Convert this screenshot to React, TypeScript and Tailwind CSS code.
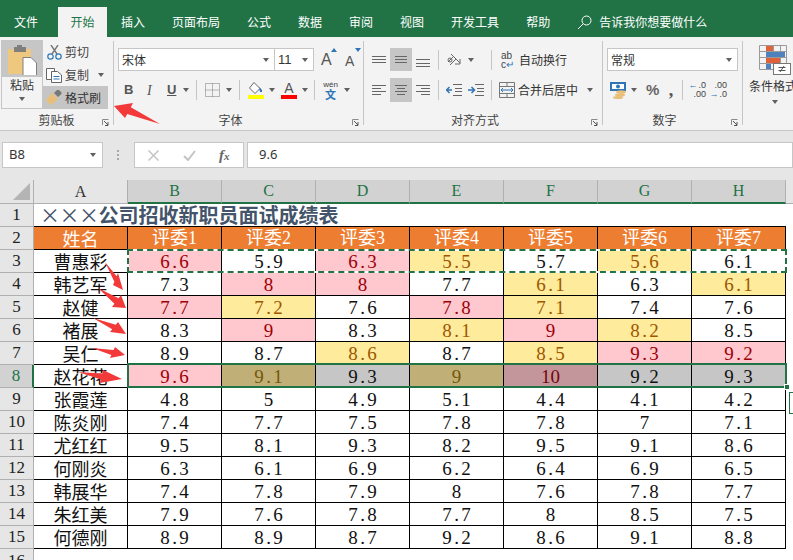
import React from 'react'

const tabs = ['插入', '页面布局', '公式', '数据', '审阅', '视图', '开发工具', '帮助']
const columns = ['B', 'C', 'D', 'E', 'F', 'G', 'H']

// p = pink, y = yellow, s = selected gray, o = selected yellow, d = selected pink, . = plain
const rows = [
  { name: '曹惠彩', scores: ['6.6', '5.9', '6.3', '5.5', '5.7', '5.6', '6.1'], fill: 'p.py.y.' },
  { name: '韩艺军', scores: ['7.3', '8', '8', '7.7', '6.1', '6.3', '6.1'], fill: '.pp.y.y' },
  { name: '赵健', scores: ['7.7', '7.2', '7.6', '7.8', '7.1', '7.4', '7.6'], fill: 'py.py..' },
  { name: '褚展', scores: ['8.3', '9', '8.3', '8.1', '9', '8.2', '8.5'], fill: '.p.ypy.' },
  { name: '吴仁', scores: ['8.9', '8.7', '8.6', '8.7', '8.5', '9.3', '9.2'], fill: '..y.ypp' },
  { name: '赵花花', scores: ['9.6', '9.1', '9.3', '9', '10', '9.2', '9.3'], fill: 'posodss' },
  { name: '张霞莲', scores: ['4.8', '5', '4.9', '5.1', '4.4', '4.1', '4.2'], fill: '.......' },
  { name: '陈炎刚', scores: ['7.4', '7.7', '7.5', '7.8', '7.8', '7', '7.1'], fill: '.......' },
  { name: '尤红红', scores: ['9.5', '8.1', '9.3', '8.2', '9.5', '9.1', '8.6'], fill: '.......' },
  { name: '何刚炎', scores: ['6.3', '6.1', '6.9', '6.2', '6.4', '6.9', '6.5'], fill: '.......' },
  { name: '韩展华', scores: ['7.4', '7.8', '7.9', '8', '7.6', '7.8', '7.7'], fill: '.......' },
  { name: '朱红美', scores: ['7.9', '7.6', '7.8', '7.7', '8', '8.5', '7.5'], fill: '.......' },
  { name: '何德刚', scores: ['8.9', '8.9', '8.7', '9.2', '8.6', '9.1', '8.8'], fill: '.......' },
]

const fillClass: Record<string, string> = {
  '.': 'bg-white text-[#111]',
  p: 'bg-[#ffc7ce] text-[#9c0006]',
  y: 'bg-[#ffeb9c] text-[#9c5700]',
  s: 'bg-[#c6c6c6] text-[#111]',
  o: 'bg-[#c0b077] text-[#75570a]',
  d: 'bg-[#c2969b] text-[#75050a]',
}

function Caret({ className = '' }: { className?: string }) {
  return <span className={'inline-block h-0 w-0 border-x-[3.5px] border-t-[4px] border-x-transparent border-t-[#606060] ' + className} />
}

function Launcher() {
  return (
    <svg className="absolute right-[4px] bottom-[4px]" width="7" height="7" viewBox="0 0 7 7">
      <path d="M0.5 6V0.5H6.5" fill="none" stroke="#8a8a8a" />
      <path d="M2 2L6 6M6 3V6.5H3" fill="none" stroke="#555" />
    </svg>
  )
}

function Sep() {
  return <div className="mt-1 mb-[5px] w-px bg-[#c6c6c6]" />
}

function MiniSep({ className = '' }: { className?: string }) {
  return <div className={'h-[20px] w-px bg-[#c6c6c6] ' + className} />
}

function Lines({ items, color = '#666' }: { items: number[][]; color?: string }) {
  return (
    <svg width="16" height="18" viewBox="0 0 16 18">
      {items.map((l, i) => (
        <line key={i} x1={l[0]} x2={l[1]} y1={l[2] + 0.5} y2={l[2] + 0.5} stroke={color} />
      ))}
    </svg>
  )
}

function AlignBtn({ items, active }: { items: number[][]; active?: boolean }) {
  return (
    <div className={'flex h-full w-[22px] items-center justify-center ' + (active ? 'bg-[#c6c6c6]' : '')}>
      <Lines items={items} />
    </div>
  )
}

function Num({ value }: { value: string }) {
  const parts = value.split('.')
  return (
    <span className="font-['Liberation_Serif',serif] text-[19px] leading-none">
      {parts[0]}
      {parts[1] && <span className="inline-block w-[9.5px] text-center">.</span>}
      {parts[1]}
    </span>
  )
}

function arrowPoints(tail: number[], tip: number[], a: number[], b: number[]) {
  // notches sit about halfway from each barb to the shaft
  const mid = [(a[0] + b[0]) / 2, (a[1] + b[1]) / 2]
  const n1 = [a[0] + (mid[0] - a[0]) * 0.55, a[1] + (mid[1] - a[1]) * 0.55]
  const n2 = [b[0] + (mid[0] - b[0]) * 0.55, b[1] + (mid[1] - b[1]) * 0.55]
  return [tail, n1, a, tip, b, n2].map((p) => p.join(',')).join(' ')
}

const arrows = [
  [[160, 124], [114, 106], [133, 103], [125, 118]],
  [[105, 262], [123, 290], [118, 273], [113, 285]],
  [[98, 288], [126, 308], [121, 295], [112, 307]],
  [[93, 318], [126, 334], [118, 322], [110, 332]],
  [[92, 348], [125, 355], [115, 347], [110, 358]],
  [[78, 372], [122, 379], [103, 370], [100, 383]],
]

export default function App() {
  return (
    <div lang="zh-CN" className="relative h-[560px] w-[793px] overflow-hidden bg-white font-['Noto_Sans_CJK_SC',sans-serif] text-[12px] text-[#444]">
      {/* tabs */}
      <div className="flex h-[37px] gap-px bg-[#217346] pl-px text-white">
        <div className="mt-[7px] flex h-[30px] items-center px-[13px]">文件</div>
        <div className="mt-[7px] ml-[6px] flex h-[30px] w-[49px] items-center justify-center bg-[#f3f3f3] text-[#217346]">开始</div>
        {tabs.map((t) => (
          <div key={t} className="mt-[7px] flex h-[30px] items-center px-[13px]">{t}</div>
        ))}
        <div className="mt-[7px] ml-[13px] flex h-[30px] items-center">
          <svg width="15" height="15" viewBox="0 0 15 15" fill="none" stroke="#fff">
            <circle cx="9.5" cy="5.5" r="4.5" />
            <path d="M6.2 8.8L1 14" />
          </svg>
          <span className="ml-[7px]">告诉我你想要做什么</span>
        </div>
      </div>

      {/* ribbon */}
      <div className="flex h-[94px] border-b border-[#c8c8c8] bg-[#f3f3f3]">
        {/* clipboard */}
        <div className="relative flex w-[113px] flex-col">
          <div className="flex h-[73px] pt-[3px] pl-px">
            <div className="flex h-[69px] w-[42px] flex-col items-center border border-[#c6c6c6]">
              <div className="flex h-[36px] w-full items-center justify-center bg-[#c6c6c6]">
                <svg width="32" height="32" viewBox="0 0 32 32">
                  <rect x="2" y="6" width="23" height="25" rx="1" fill="#edc87e" />
                  <path d="M8 6V4H11V2H16V4H20V9H8Z" fill="#7f7f7f" />
                  <path d="M17 14.5H25L30.5 20V32.5H17Z" fill="#fff" stroke="#808080" />
                </svg>
              </div>
              <span className="mt-[1px] leading-[14px] text-[#333]">粘贴</span>
              <Caret className="mt-[5px]" />
            </div>
            <div className="flex w-[65px] flex-col pt-[2px]">
              <div className="flex h-[20px] items-center pl-[4px]">
                <svg width="15" height="15" viewBox="0 0 15 15" fill="none">
                  <path d="M4 0L10 9M11 0L5 9" stroke="#777" strokeWidth="1.4" />
                  <circle cx="3.5" cy="11.5" r="2.7" stroke="#2e75b6" strokeWidth="1.2" />
                  <circle cx="11.5" cy="11.5" r="2.7" stroke="#2e75b6" strokeWidth="1.2" />
                </svg>
                <span className="ml-[3px]">剪切</span>
              </div>
              <div className="mt-[3px] flex h-[20px] items-center pl-[3px]">
                <svg width="16" height="15" viewBox="0 0 16 15" fill="#fff" stroke="#666">
                  <path d="M0.5 0.5H8.5V11.5H0.5Z" />
                  <path d="M5.5 3.5H11.5L15.5 7V14.5H5.5Z" />
                  <path d="M7.5 8.5H13.5M7.5 11H13.5" stroke="#2e75b6" />
                </svg>
                <span className="ml-[3px]">复制</span>
                <Caret className="ml-[9px]" />
              </div>
              <div className="mt-px flex h-[23px] items-center bg-[#c5c5c5] pl-[3px]">
                <svg width="16" height="15" viewBox="0 0 16 15">
                  <path d="M0 10L6 3L12 9L5 15Z" fill="#e8bf78" />
                  <path d="M8 3L11 0H13L15.5 2.5V4L12 7Z" fill="#777" />
                </svg>
                <span className="ml-[3px] text-[#333]">格式刷</span>
              </div>
            </div>
          </div>
          <div className="mt-auto flex h-[20px] items-center justify-center">剪贴板</div>
          <Launcher />
        </div>
        <Sep />

        {/* font */}
        <div className="relative flex w-[249px] flex-col pl-[4px]">
          <div className="mt-[11px] flex h-[23px] items-center">
            <div className="flex h-full w-[157px] items-center justify-between border border-[#c6c6c6] bg-white pr-[5px] pl-[3px] text-[#333]">
              宋体<Caret />
            </div>
            <div className="-ml-px flex h-full w-[40px] items-center justify-between border border-[#c6c6c6] bg-white pr-[5px] pl-[3px] text-[#333]">
              <span className="font-['Liberation_Sans',sans-serif] text-[13px]">11</span>
              <Caret />
            </div>
            <div className="relative ml-[7px] w-[14px] font-['Liberation_Sans',sans-serif] text-[16px] leading-none text-[#555]">
              A
              <span className="absolute -top-[4px] right-[-2px] h-0 w-0 border-x-[3px] border-b-[4px] border-x-transparent border-b-[#2e75b6]" />
            </div>
            <div className="relative ml-[10px] w-[12px] pt-[2px] font-['Liberation_Sans',sans-serif] text-[14px] leading-none text-[#555]">
              A
              <span className="absolute -top-[4px] right-[-4px] h-0 w-0 border-x-[3px] border-t-[4px] border-x-transparent border-t-[#2e75b6]" />
            </div>
          </div>
          <div className="mt-[9px] flex h-[20px] items-center text-[#555]">
            <span className="ml-[6px] w-[10px] font-['Liberation_Sans',sans-serif] text-[13px] font-bold">B</span>
            <span className="ml-[13px] w-[8px] font-['Liberation_Serif',serif] text-[14px] italic">I</span>
            <span className="ml-[12px] w-[10px] font-['Liberation_Sans',sans-serif] text-[13px] font-bold underline">U</span>
            <Caret className="ml-[6px]" />
            <MiniSep className="ml-[7px]" />
            <svg className="ml-[8px]" width="15" height="14" viewBox="0 0 15 14" fill="none" stroke="#777" strokeDasharray="1 1">
              <path d="M0.5 0.5H14.5V13.5H0.5ZM7.5 0.5V13.5M0.5 7H14.5" />
            </svg>
            <Caret className="ml-[6px]" />
            <MiniSep className="ml-[7px]" />
            <div className="ml-[7px] flex w-[17px] flex-col items-center">
              <svg width="15" height="13" viewBox="0 0 15 13" fill="none">
                <path d="M6 0.5L12 6.5L7 11.5L1.5 6Z" fill="#fff" stroke="#666" />
                <path d="M11 5L14 8V10H12Z" fill="#2e75b6" />
              </svg>
              <span className="h-[4px] w-[16px] bg-[#ffff00]" />
            </div>
            <Caret className="ml-[5px]" />
            <div className="ml-[6px] flex w-[16px] flex-col items-center">
              <span className="h-[13px] font-['Liberation_Sans',sans-serif] text-[14px] leading-[13px] text-[#555]">A</span>
              <span className="h-[4px] w-[16px] bg-[#ff0000]" />
            </div>
            <Caret className="ml-[5px]" />
            <MiniSep className="ml-[6px]" />
            <div className="ml-[7px] flex w-[17px] flex-col items-center">
              <span className="font-['Liberation_Sans',sans-serif] text-[8px] leading-[8px] text-[#444]">wén</span>
              <span className="text-[11px] leading-[11px] font-bold text-[#2e75b6]">文</span>
            </div>
            <Caret className="ml-[5px]" />
          </div>
          <div className="mt-auto flex h-[20px] items-center justify-center pr-[20px]">字体</div>
          <Launcher />
        </div>
        <Sep />

        {/* alignment */}
        <div className="relative flex w-[238px] flex-col pl-[4px]">
          <div className="mt-[11px] flex h-[23px] items-center">
            <AlignBtn items={[[1, 15, 5], [1, 15, 8], [1, 15, 11]]} />
            <AlignBtn active items={[[2, 14, 5], [2, 14, 8], [2, 14, 11]]} />
            <AlignBtn items={[[1, 15, 8], [1, 15, 12], [1, 15, 15]]} />
            <MiniSep className="ml-[4px]" />
            <svg className="ml-[7px]" width="17" height="17" viewBox="0 0 17 17" fill="none" stroke="#666">
              <path d="M2 11L8 5M4 14L10 8M5 3L14 12" />
              <path d="M14 8V13H9" stroke="#666" />
              <circle cx="4" cy="9" r="2" />
            </svg>
            <Caret className="ml-[5px]" />
            <MiniSep className="ml-[17px]" />
            <div className="ml-[9px] flex w-[15px] flex-col font-['Liberation_Sans',sans-serif] text-[10px] leading-[9px] text-[#444]">
              <span>ab</span>
              <span>c<span className="text-[#2e75b6]">↵</span></span>
            </div>
            <span className="ml-[3px] text-[#333]">自动换行</span>
          </div>
          <div className="mt-[7px] flex h-[24px] items-center">
            <AlignBtn items={[[1, 15, 4], [1, 10, 7], [1, 15, 10], [1, 10, 13]]} />
            <AlignBtn active items={[[2, 14, 4], [4, 12, 7], [2, 14, 10], [4, 12, 13]]} />
            <AlignBtn items={[[1, 15, 4], [6, 15, 7], [1, 15, 10], [6, 15, 13]]} />
            <MiniSep className="ml-[4px]" />
            <svg className="ml-[7px]" width="16" height="14" viewBox="0 0 16 14" fill="none">
              <path d="M7 1.5H16M9 5.5H16M9 8.5H16M7 12.5H16" stroke="#666" />
              <path d="M6 7H1M3.5 4L0.5 7L3.5 10" stroke="#2e75b6" strokeWidth="1.5" />
            </svg>
            <svg className="ml-[6px]" width="16" height="14" viewBox="0 0 16 14" fill="none">
              <path d="M7 1.5H16M9 5.5H16M9 8.5H16M7 12.5H16" stroke="#666" />
              <path d="M0 7H6M3.5 4L6.5 7L3.5 10" stroke="#2e75b6" strokeWidth="1.5" />
            </svg>
            <MiniSep className="ml-[7px]" />
            <svg className="ml-[7px]" width="16" height="16" viewBox="0 0 16 16" fill="none">
              <path d="M0.5 0.5H15.5V15.5H0.5ZM0.5 4.5H15.5M0.5 11.5H15.5M8 0.5V4.5M8 11.5V15.5" stroke="#777" />
              <path d="M2 8H14M4 6L2 8L4 10M12 6L14 8L12 10" stroke="#2e75b6" />
            </svg>
            <span className="ml-[3px] text-[#333]">合并后居中</span>
            <Caret className="ml-[9px]" />
          </div>
          <div className="mt-auto flex h-[20px] items-center justify-center pr-[20px]">对齐方式</div>
          <Launcher />
        </div>
        <Sep />

        {/* number */}
        <div className="relative flex w-[139px] flex-col pl-[4px]">
          <div className="mt-[11px] flex h-[23px] w-[131px] items-center justify-between border border-[#c6c6c6] bg-white pr-[5px] pl-[3px] text-[#333]">
            常规<Caret />
          </div>
          <div className="mt-[7px] flex h-[24px] items-center">
            <svg className="ml-[3px]" width="17" height="17" viewBox="0 0 17 17">
              <rect x="0" y="0" width="16" height="9" fill="#2e75b6" />
              <rect x="2" y="2" width="12" height="5" fill="#fff" />
              <circle cx="8" cy="4.5" r="2" fill="#2e75b6" />
              <ellipse cx="11" cy="10" rx="5" ry="1.8" fill="#e8bf78" />
              <ellipse cx="10" cy="13" rx="5" ry="1.8" fill="#e8bf78" />
              <ellipse cx="8" cy="15.5" rx="5" ry="1.5" fill="#e8bf78" />
            </svg>
            <Caret className="ml-[4px]" />
            <span className="ml-[9px] w-[14px] font-['Liberation_Sans',sans-serif] text-[15px] font-bold text-[#666]">%</span>
            <span className="ml-[6px] w-[10px] text-center font-['Liberation_Serif',serif] text-[18px] leading-[12px] font-bold text-[#555]">,</span>
            <MiniSep className="ml-[6px]" />
            <div className="ml-[7px] flex w-[16px] flex-col items-end font-['Liberation_Sans',sans-serif] text-[9px] leading-[9px] text-[#444]">
              <span className="flex items-center"><span className="mr-px text-[#2e75b6]">←</span>.0</span>
              <span>.00</span>
            </div>
            <div className="ml-[5px] flex w-[16px] flex-col items-end font-['Liberation_Sans',sans-serif] text-[9px] leading-[9px] text-[#444]">
              <span>.00</span>
              <span className="flex items-center"><span className="mr-px text-[#2e75b6]">→</span>.0</span>
            </div>
          </div>
          <div className="mt-auto flex h-[20px] items-center justify-center pr-[20px]">数字</div>
          <Launcher />
        </div>
        <Sep />

        {/* conditional format */}
        <div className="flex flex-1 flex-col overflow-hidden">
          <svg className="mt-[8px] ml-[16px] shrink-0" width="32" height="30" viewBox="0 0 32 30" fill="none">
            <path d="M0.5 0.5H27.5V24.5H0.5ZM0.5 6.5H27.5M0.5 12.5H27.5M0.5 18.5H27.5M7.5 0.5V24.5M14.5 0.5V24.5M21.5 0.5V24.5" stroke="#9a9a9a" />
            <rect x="7" y="1" width="7" height="5" fill="#e0623a" />
            <rect x="7" y="7" width="19" height="5" fill="#4f81bd" />
            <rect x="7" y="13" width="14" height="5" fill="#e0623a" />
            <rect x="7" y="19" width="5" height="5" fill="#4f81bd" />
            <rect x="14.5" y="18.5" width="17" height="11" fill="#fff" stroke="#777" />
            <path d="M19.5 22.5H26.5M19.5 25.5H26.5M25 21L21 27" stroke="#555" />
          </svg>
          <span className="mt-[2px] ml-[6px] whitespace-nowrap text-[#333]">条件格式化</span>
          <Caret className="mt-[5px] ml-[29px] shrink-0" />
        </div>
      </div>

      {/* formula bar */}
      <div className="flex h-[49px] bg-[#e6e6e6] pt-[11px]">
        <div className="ml-[2px] flex h-[26px] w-[101px] items-center justify-between border border-[#c6c6c6] bg-white pr-[6px] pl-[6px] font-['Noto_Sans',sans-serif] text-[13px] text-[#333]">
          B8<Caret />
        </div>
        <div className="ml-[14px] flex h-[26px] w-[3px] flex-col justify-center gap-[2px]">
          <span className="h-[2px] w-[2px] bg-[#a8a8a8]" />
          <span className="h-[2px] w-[2px] bg-[#a8a8a8]" />
          <span className="h-[2px] w-[2px] bg-[#a8a8a8]" />
        </div>
        <div className="ml-[14px] flex h-[26px] w-[110px] items-center border border-[#c6c6c6] bg-white">
          <svg className="ml-[13px]" width="11" height="11" viewBox="0 0 11 11" fill="none" stroke="#c4c4c4" strokeWidth="1.5">
            <path d="M0.5 0.5L10.5 10.5M10.5 0.5L0.5 10.5" />
          </svg>
          <svg className="ml-[24px]" width="13" height="11" viewBox="0 0 13 11" fill="none" stroke="#c4c4c4" strokeWidth="2">
            <path d="M1 6L5 10L12 1" />
          </svg>
          <span className="ml-[23px] font-['Liberation_Serif',serif] text-[15px] font-bold text-[#666] italic">
            f<span className="text-[11px]">x</span>
          </span>
        </div>
        <div className="ml-[3px] flex h-[26px] flex-1 items-center border border-[#c6c6c6] bg-white pl-[11px] font-['Noto_Sans',sans-serif] text-[13px] text-[#333]">
          9.6
        </div>
      </div>

      {/* sheet */}
      <div className="relative h-[380px] overflow-hidden">
        <div className="grid grid-cols-[34px_repeat(8,94px)_1fr] grid-rows-[24px_repeat(16,23px)]">
          <div className="flex items-end justify-end border-r border-b border-[#b0b0b0] bg-[#e6e6e6] pr-[3px] pb-[3px]">
            <span className="h-0 w-0 border-b-[17px] border-l-[17px] border-b-[#b4b4b4] border-l-transparent" />
          </div>
          <div className="flex items-center justify-center border-r border-b border-[#b0b0b0] bg-[#e6e6e6] font-['Liberation_Serif',serif] text-[16px] text-[#333]">A</div>
          {columns.map((c) => (
            <div key={c} className="flex items-center justify-center border-r border-b-2 border-r-[#b0b0b0] border-b-[#217346] bg-[#d2d2d2] font-['Liberation_Serif',serif] text-[16px] text-[#217346]">{c}</div>
          ))}
          <div className="border-b border-[#b0b0b0] bg-[#e6e6e6]" />

          {/* row 1 */}
          <div className="flex items-center justify-center border-r border-b border-[#b0b0b0] bg-[#e6e6e6] font-['Liberation_Serif',serif] text-[17px] text-[#222]">1</div>
          <div className="col-span-8 flex items-center border-b border-black bg-white pl-[6px] text-[20px] leading-none font-bold text-[#44546a]">
            <span className="w-[19.5px] text-center font-normal">×</span>
            <span className="w-[19.5px] text-center font-normal">×</span>
            <span className="w-[19.5px] text-center font-normal">×</span>
            公司招收新职员面试成绩表
          </div>
          <div className="bg-white" />

          {/* row 2 */}
          <div className="flex items-center justify-center border-r border-b border-[#b0b0b0] bg-[#e6e6e6] font-['Liberation_Serif',serif] text-[17px] text-[#222]">2</div>
          <div className="flex items-center justify-center border-r border-b border-black bg-[#ed7d31] text-[18px] leading-none text-white">姓名</div>
          {columns.map((c, i) => (
            <div key={c} className="flex items-center justify-center border-r border-b border-black bg-[#ed7d31] font-['Liberation_Serif','Noto_Sans_CJK_SC',serif] text-[18px] leading-none text-white">评委{i + 1}</div>
          ))}
          <div className="bg-white" />

          {rows.map((r, i) => {
            const n = i + 3
            return (
              <React.Fragment key={n}>
                <div className={'flex items-center justify-center border-b border-b-[#b0b0b0] font-[\'Liberation_Serif\',serif] text-[17px] ' + (n === 8 ? 'border-r-2 border-r-[#217346] bg-[#d2d2d2] text-[#217346]' : 'border-r border-r-[#b0b0b0] bg-[#e6e6e6] text-[#222]')}>{n}</div>
                <div className="flex items-center justify-center border-r border-b border-black bg-white text-[18px] leading-none text-[#111]">{r.name}</div>
                {r.scores.map((s, j) => (
                  <div key={j} className={'flex items-center justify-center border-r border-b border-black ' + fillClass[r.fill[j]]}>
                    <Num value={s} />
                  </div>
                ))}
                <div className="bg-white" />
              </React.Fragment>
            )
          })}

          {/* row 16 */}
          <div className="flex items-center justify-center border-r border-[#b0b0b0] bg-[#e6e6e6] font-['Liberation_Serif',serif] text-[17px] text-[#222]">16</div>
          <div className="col-span-9 bg-white" />
        </div>

        {/* copy marquee on row 3 */}
        <div className="absolute top-[69px] left-[127px] h-[24px] w-[660px] border-2 border-white">
          <div className="absolute -inset-[2px] border-2 border-dashed border-[#217346]" />
        </div>
        {/* selection on row 8 */}
        <div className="absolute top-[183px] left-[127px] h-[25px] w-[660px] border-2 border-[#217346]" />
        <div className="absolute top-[204px] left-[784px] h-[6px] w-[6px] border border-white bg-[#217346]" />
        {/* paste options button, cut off by the window */}
        <div className="absolute top-[212px] left-[789px] h-[22px] w-[20px] border border-[#217346] bg-white" />
      </div>

      {/* red arrows drawn on the picture */}
      <svg className="pointer-events-none absolute top-0 left-0" width="793" height="560">
        {arrows.map((a, i) => (
          <polygon key={i} points={arrowPoints(a[0], a[1], a[2], a[3])} fill="#f23a3a" />
        ))}
      </svg>
    </div>
  )
}
